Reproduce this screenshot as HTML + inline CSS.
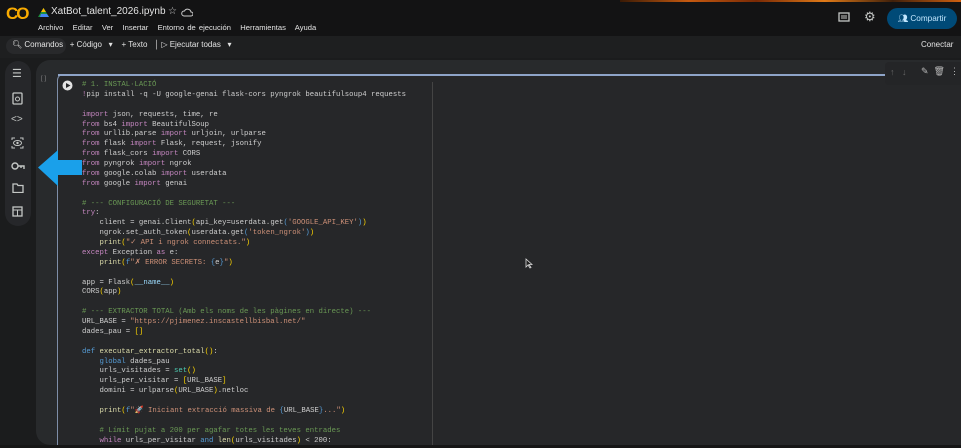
<!DOCTYPE html>
<html><head><meta charset="utf-8"><style>
*{margin:0;padding:0;box-sizing:border-box}
html,body{width:961px;height:448px;overflow:hidden}
body{background:#1b1c1d;font-family:"Liberation Sans",sans-serif;color:#e3e3e3;position:relative}
.top{position:absolute;left:0;top:0;width:961px;height:36px;background:#131314}
.fire{position:absolute;left:620px;top:0;width:341px;height:2px;background:linear-gradient(90deg,#3a1a05,#c65a10,#7a2a05,#e07a18,#40200a,#d06010)}
.tb{position:absolute;left:0;top:36px;width:961px;height:22px;background:#1e1f20}
.abs{position:absolute;white-space:nowrap}
.side{position:absolute;left:5px;top:61px;width:26px;height:165px;background:#26272a;border-radius:13px}
.panel{position:absolute;left:36px;top:60px;width:940px;height:385px;background:#282a2c;border-radius:14px 0 0 14px}
.cell{position:absolute;left:57px;top:74px;width:920px;height:371px;border:1px solid #7e8ea8;border-bottom:none;border-radius:6px 0 0 0;background:#262729}
.code{position:absolute;left:82px;top:81px;font-family:"Liberation Mono",monospace;font-size:7.3px;line-height:9.88px;color:#cfcfcf;white-space:pre}
.k{color:#c586c0}.c{color:#6a9955}.s{color:#ce9178}.f{color:#dcdcaa}.b{color:#ffd700}.d{color:#569cd6}.t{color:#4ec9b0}.v{color:#9cdcfe}
.ic{position:absolute;color:#c4c7c5;font-size:11px}
</style></head><body>
<div class="top"></div><div class="fire"></div>
<div class="tb"></div>
<div class="abs" style="left:6px;top:4px;font-size:17px;font-weight:bold;color:#f9ab00;letter-spacing:-2px">CO</div>
<svg class="abs" style="left:38px;top:8px" width="11" height="10"><polygon points="5.5,0 11,9 0,9" fill="#1e8e3e"/><polygon points="5.5,0 8,4 3,4" fill="#fbbc04"/><polygon points="2,9 11,9 9,6 3,6" fill="#4285f4"/></svg>
<div class="abs" style="left:51px;top:6px;font-size:10px;color:#e3e3e3">XatBot_talent_2026.ipynb</div>
<div class="abs" style="left:168px;top:6px;font-size:10px;color:#ccc">☆</div>
<svg class="abs" style="left:181px;top:8px" width="12" height="9"><path d="M3 8h7a2 2 0 0 0 0-4 3.5 3.5 0 0 0-6.5-1A2.5 2.5 0 0 0 3 8z" fill="none" stroke="#ccc" stroke-width="1"/></svg>
<div class="abs" style="left:38px;top:23px;font-size:7.6px;color:#e3e3e3;word-spacing:1px">Archivo&nbsp;&nbsp; Editar&nbsp;&nbsp; Ver&nbsp;&nbsp; Insertar&nbsp;&nbsp; Entorno de ejecución&nbsp;&nbsp; Herramientas&nbsp;&nbsp; Ayuda</div>
<div class="abs" style="left:6px;top:38px;width:60px;height:16px;background:#28292b;border-radius:8px"></div>
<div class="abs" style="left:12px;top:40px;font-size:8px;color:#e3e3e3">🔍︎ Comandos&nbsp;&nbsp;&nbsp;+ Código&nbsp;&nbsp; ▾&nbsp;&nbsp;&nbsp; + Texto&nbsp;&nbsp; │ ▷ Ejecutar todas&nbsp;&nbsp; ▾</div>
<div class="abs" style="left:921px;top:40px;font-size:8px;color:#e3e3e3">Conectar</div>
<svg class="abs" style="left:838px;top:12px" width="12" height="12"><rect x="1" y="1" width="10" height="8" fill="none" stroke="#c4c7c5" stroke-width="1.3"/><path d="M3 4h6M3 6h6" stroke="#c4c7c5"/></svg>
<div class="abs" style="left:864px;top:9px;font-size:13px;color:#c4c7c5">⚙</div>
<div class="abs" style="left:887px;top:8px;width:70px;height:21px;background:#004a77;border-radius:11px;display:flex;align-items:center;justify-content:center;font-size:8.2px;color:#c2e7ff">👥︎&nbsp;Compartir</div>
<div class="side"></div>
<div class="ic" style="left:12px;top:67px">☰</div>
<svg class="abs" style="left:12px;top:92px" width="11" height="13"><rect x="1" y="1" width="9" height="11" rx="1" fill="none" stroke="#c4c7c5" stroke-width="1.3"/><circle cx="5.5" cy="7" r="2" fill="none" stroke="#c4c7c5"/></svg>
<div class="ic" style="left:11px;top:114px;font-size:10px">&lt;&gt;</div>
<svg class="abs" style="left:11px;top:137px" width="13" height="12"><path d="M1 3V1h3M9 1h3v2M12 9v2H9M4 11H1V9" fill="none" stroke="#c4c7c5"/><ellipse cx="6.5" cy="6" rx="4" ry="2.5" fill="none" stroke="#c4c7c5"/><circle cx="6.5" cy="6" r="1.2" fill="#c4c7c5"/></svg>
<svg class="abs" style="left:11px;top:162px" width="14" height="8"><circle cx="4" cy="4" r="3" fill="none" stroke="#c4c7c5" stroke-width="1.4"/><path d="M7 4h6v3M10 4v2" fill="none" stroke="#c4c7c5" stroke-width="1.4"/></svg>
<svg class="abs" style="left:12px;top:183px" width="12" height="10"><path d="M1 1h4l1 1.5h5v7H1z" fill="none" stroke="#c4c7c5" stroke-width="1.3"/></svg>
<svg class="abs" style="left:12px;top:206px" width="11" height="11"><rect x="1" y="1" width="9" height="9" fill="none" stroke="#c4c7c5" stroke-width="1.3"/><path d="M1 4h9M5.5 4v6" stroke="#c4c7c5"/></svg>
<div class="panel"></div>
<div class="abs" style="left:41px;top:76px;font-size:6px;color:#888">[ ]</div>
<div class="cell"></div>
<div class="abs" style="left:58px;top:74px;width:830px;height:1.5px;background:#8ea4c8"></div>
<div class="abs" style="left:885px;top:62px;width:80px;height:23px;background:#242527;border-radius:4px"></div>
<div class="abs" style="left:890px;top:67px;font-size:9px;color:#666">↑&nbsp;&nbsp; ↓</div>
<div class="abs" style="left:921px;top:66px;font-size:9px;color:#bbb">✎&nbsp; 🗑︎&nbsp; ⋮</div>
<svg class="abs" style="left:62px;top:80px" width="11" height="11"><circle cx="5.5" cy="5.5" r="5" fill="#e3e3e3"/><polygon points="4,3 8.5,5.5 4,8" fill="#262729"/></svg>
<div class="abs" style="left:432px;top:82px;width:1px;height:363px;background:#444"></div>
<svg class="abs" style="left:525px;top:258px" width="8" height="11"><path d="M1 1v8l2-2 2 3 1-.5-2-3h3z" fill="#222" stroke="#ddd" stroke-width=".8"/></svg>
<pre class="code"><span class="c"># 1. INSTAL·LACIÓ</span>
<span class="k">!</span>pip install -q -U google-genai flask-cors pyngrok beautifulsoup4 requests

<span class="k">import</span> json, requests, time, re
<span class="k">from</span> bs4 <span class="k">import</span> BeautifulSoup
<span class="k">from</span> urllib.parse <span class="k">import</span> urljoin, urlparse
<span class="k">from</span> flask <span class="k">import</span> Flask, request, jsonify
<span class="k">from</span> flask_cors <span class="k">import</span> CORS
<span class="k">from</span> pyngrok <span class="k">import</span> ngrok
<span class="k">from</span> google.colab <span class="k">import</span> userdata
<span class="k">from</span> google <span class="k">import</span> genai

<span class="c"># --- CONFIGURACIÓ DE SEGURETAT ---</span>
<span class="k">try</span>:
    client = genai.Client<span class="b">(</span>api_key=userdata.get<span class="d">(</span><span class="s">'GOOGLE_API_KEY'</span><span class="d">)</span><span class="b">)</span>
    ngrok.set_auth_token<span class="b">(</span>userdata.get<span class="d">(</span><span class="s">'token_ngrok'</span><span class="d">)</span><span class="b">)</span>
    <span class="f">print</span><span class="b">(</span><span class="s">"✓ API i ngrok connectats."</span><span class="b">)</span>
<span class="k">except</span> Exception <span class="k">as</span> e:
    <span class="f">print</span><span class="b">(</span><span class="d">f</span><span class="s">"✗ ERROR SECRETS: </span><span class="d">{</span>e<span class="d">}</span><span class="s">"</span><span class="b">)</span>

app = Flask<span class="b">(</span><span class="v">__name__</span><span class="b">)</span>
CORS<span class="b">(</span>app<span class="b">)</span>

<span class="c"># --- EXTRACTOR TOTAL (Amb els noms de les pàgines en directe) ---</span>
URL_BASE = <span class="s">"https://pjimenez.inscastellbisbal.net/"</span>
dades_pau = <span class="b">[]</span>

<span class="d">def</span> <span class="f">executar_extractor_total</span><span class="b">()</span>:
    <span class="d">global</span> dades_pau
    urls_visitades = <span class="t">set</span><span class="b">()</span>
    urls_per_visitar = <span class="b">[</span>URL_BASE<span class="b">]</span>
    domini = urlparse<span class="b">(</span>URL_BASE<span class="b">)</span>.netloc

    <span class="f">print</span><span class="b">(</span><span class="d">f</span><span class="s">"🚀 Iniciant extracció massiva de </span><span class="d">{</span>URL_BASE<span class="d">}</span><span class="s">..."</span><span class="b">)</span>

    <span class="c"># Límit pujat a 200 per agafar totes les teves entrades</span>
    <span class="k">while</span> urls_per_visitar <span class="d">and</span> <span class="f">len</span><span class="b">(</span>urls_visitades<span class="b">)</span> &lt; 200:</pre>
<div class="abs" style="left:0;top:445px;width:961px;height:3px;background:#161616"></div>
<svg class="abs" style="left:37px;top:149px" width="46" height="38"><polygon points="1,18.5 21,1 21,11 45,11 45,26 21,26 21,37" fill="#1aa0ea"/></svg>
</body></html>
